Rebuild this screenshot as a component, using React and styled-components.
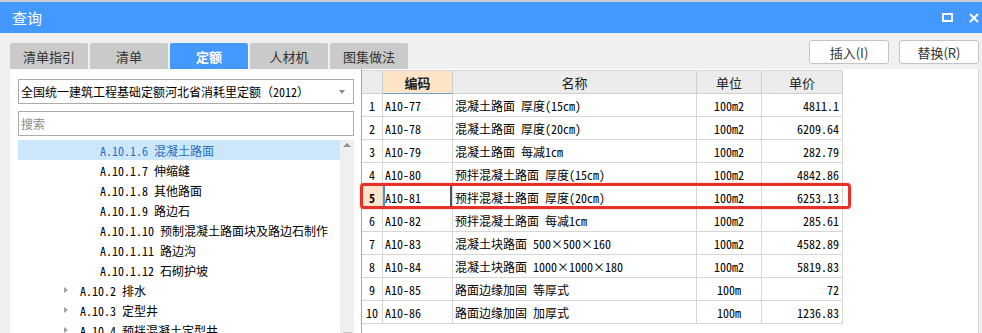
import React from "react";
import styled, { createGlobalStyle } from "styled-components";

const UI = `"Noto Sans CJK SC", "Noto Sans", sans-serif`;
const MONO = `"Noto Sans Mono CJK SC", "Noto Sans CJK SC", monospace`;

const Global = createGlobalStyle`
  html, body { margin: 0; padding: 0; }
  body { background: #f0f0f0; font-family: ${UI}; overflow: hidden; }
  * { box-sizing: border-box; }
`;

const Window = styled.div`
  width: 982px;
  height: 333px;
  display: flex;
  flex-direction: column;
  background: #f0f0f0;
  overflow: hidden;
`;

const TopStrip = styled.div`
  height: 2px;
  background: #c9cdd1;
  flex-shrink: 0;
`;

const TitleBar = styled.div`
  height: 31px;
  flex-shrink: 0;
  background: #4499ff;
  display: flex;
  align-items: center;
  justify-content: space-between;
  padding: 0 3px 0 12px;
`;

const Title = styled.div`
  color: #fff;
  font-family: ${UI};
  font-size: 15px;
  line-height: 20px;
`;

const WinControls = styled.div`
  display: flex;
  align-items: center;
  gap: 16px;
`;

const Body = styled.div`
  flex: 1;
  display: flex;
  flex-direction: column;
  padding: 7px 3px 0 10px;
  min-height: 0;
`;

const Toolbar = styled.div`
  display: flex;
  justify-content: space-between;
  height: 29px;
  flex-shrink: 0;
`;

const Tabs = styled.div`
  display: flex;
  gap: 2px;
  align-self: flex-end;
`;

const Tab = styled.div`
  width: 78px;
  height: 26px;
  border-radius: 2px 2px 0 0;
  background: ${(p) => (p.$active ? "#4499ff" : "#cacaca")};
  color: ${(p) => (p.$active ? "#fff" : "#333")};
  font-weight: ${(p) => (p.$active ? 700 : 400)};
  font-family: ${UI};
  font-size: 13px;
  display: flex;
  align-items: center;
  justify-content: center;
`;

const Buttons = styled.div`
  display: flex;
  gap: 10px;
  align-self: flex-start;
`;

const Button = styled.button`
  width: 80px;
  height: 24px;
  border: 1px solid #c3c3c3;
  border-radius: 3px;
  background: #fff;
  color: #333;
  font-family: ${UI};
  font-size: 13px;
  padding: 0;
  display: flex;
  align-items: center;
  justify-content: center;
`;

const Main = styled.div`
  flex: 1;
  display: flex;
  min-height: 0;
`;

const LeftPanel = styled.div`
  width: 351px;
  flex-shrink: 0;
  background: #fff;
  padding: 10px 7px 0 8px;
  display: flex;
  flex-direction: column;
`;

const Select = styled.div`
  height: 25px;
  border: 1px solid #ababab;
  display: flex;
  align-items: center;
  justify-content: space-between;
  padding: 0 8px 0 2px;
  font-family: ${MONO};
  font-size: 12px;
  color: #000;
`;

const Caret = styled.span`
  width: 0;
  height: 0;
  border-left: 3.5px solid transparent;
  border-right: 3.5px solid transparent;
  border-top: 4px solid #8a8a8a;
`;

const Search = styled.div`
  margin-top: 7px;
  height: 25px;
  border: 1px solid #ababab;
  display: flex;
  align-items: center;
  padding-left: 2px;
  font-family: ${MONO};
  font-size: 12px;
  color: #8a8a8a;
`;

const Tree = styled.div`
  margin-top: 4px;
  flex: 1;
  display: flex;
  min-height: 0;
`;

const TreeList = styled.div`
  flex: 1;
  display: flex;
  flex-direction: column;
`;

const TreeRow = styled.div`
  height: 20px;
  flex-shrink: 0;
  display: flex;
  align-items: center;
  padding-left: ${(p) => (p.$level === 3 ? 82 : 46)}px;
  background: ${(p) => (p.$selected ? "#cce6fa" : "transparent")};
  color: ${(p) => (p.$selected ? "#2a6fc0" : "#000")};
  font-family: ${MONO};
  font-size: 12px;
  white-space: nowrap;
`;

const Expander = styled.span`
  width: 0;
  height: 0;
  border-top: 3.5px solid transparent;
  border-bottom: 3.5px solid transparent;
  border-left: 4px solid #a0a0a0;
  margin-right: 12px;
`;

const ScrollTrack = styled.div`
  width: 14px;
  flex-shrink: 0;
  background: #efefef;
  display: flex;
  flex-direction: column;
  align-items: center;
`;

const UpArrow = styled.span`
  margin-top: 3px;
  width: 0;
  height: 0;
  border-left: 4px solid transparent;
  border-right: 4px solid transparent;
  border-bottom: 4px solid #8f8f8f;
`;

const Thumb = styled.div`
  margin-top: 185px;
  width: 9px;
  height: 30px;
  border-radius: 5px;
  background: #c4c4c4;
`;

const RightPanel = styled.div`
  flex: 1;
  position: relative;
  background: #fff;
  border-left: 1px solid #a9a9a9;
  border-right: 1px solid #d4d4d4;
  padding-top: 1px;
`;

const Grid = styled.div`
  display: grid;
  grid-template-columns: 21px 70px 244px 65px 81px;
  width: 481px;
  border-top: 1px solid #d6d6d6;
`;

const HeadCell = styled.div`
  height: 23px;
  border-right: 1px solid #d0d0d0;
  border-bottom: 1px solid ${(p) => (p.$active ? "#6a9fd8" : "#d0d0d0")};
  background: ${(p) => (p.$active ? "#fde4c6" : "#ececec")};
  color: #222;
  font-family: ${UI};
  font-size: 13px;
  font-weight: ${(p) => (p.$active ? 700 : 400)};
  display: flex;
  align-items: center;
  justify-content: center;
`;

const Cell = styled.div`
  height: 23px;
  border-right: 1px solid #d6d6d6;
  border-bottom: 1px solid #d6d6d6;
  display: flex;
  align-items: center;
  justify-content: ${(p) => p.$align || "flex-start"};
  padding: 0 ${(p) => (p.$align === "flex-end" ? 3 : 2)}px 0 2px;
  font-family: ${MONO};
  font-size: 12px;
  color: #000;
  white-space: nowrap;
  background: ${(p) => (p.$marked ? "#fde4c6" : "#fff")};
  font-weight: ${(p) => (p.$marked ? 700 : 400)};
  box-shadow: ${(p) =>
    p.$current ? "inset 2px 0 0 #4a8fe0, inset -2px 0 0 #555" : "none"};
`;

const Highlight = styled.div`
  position: absolute;
  left: -2px;
  top: 114px;
  width: 491px;
  height: 26px;
  border: 3px solid #e8302b;
  border-radius: 4px;
  box-shadow: 0 0 2px rgba(232, 48, 43, 0.45);
  pointer-events: none;
`;

const treeRows = [
  { level: 3, text: "A.10.1.6 混凝土路面", selected: true },
  { level: 3, text: "A.10.1.7 伸缩缝" },
  { level: 3, text: "A.10.1.8 其他路面" },
  { level: 3, text: "A.10.1.9 路边石" },
  { level: 3, text: "A.10.1.10 预制混凝土路面块及路边石制作" },
  { level: 3, text: "A.10.1.11 路边沟" },
  { level: 3, text: "A.10.1.12 石砌护坡" },
  { level: 2, text: "A.10.2 排水" },
  { level: 2, text: "A.10.3 定型井" },
  { level: 2, text: "A.10.4 预拌混凝土定型井" },
];

const rows = [
  ["A10-77", "混凝土路面 厚度(15cm)", "100m2", "4811.1"],
  ["A10-78", "混凝土路面 厚度(20cm)", "100m2", "6209.64"],
  ["A10-79", "混凝土路面 每减1cm", "100m2", "282.79"],
  ["A10-80", "预拌混凝土路面 厚度(15cm)", "100m2", "4842.86"],
  ["A10-81", "预拌混凝土路面 厚度(20cm)", "100m2", "6253.13"],
  ["A10-82", "预拌混凝土路面 每减1cm", "100m2", "285.61"],
  ["A10-83", "混凝土块路面 500×500×160", "100m2", "4582.89"],
  ["A10-84", "混凝土块路面 1000×1000×180", "100m2", "5819.83"],
  ["A10-85", "路面边缘加固 等厚式", "100m", "72"],
  ["A10-86", "路面边缘加固 加厚式", "100m", "1236.83"],
];

const tabs = ["清单指引", "清单", "定额", "人材机", "图集做法"];

export default function App() {
  return (
    <>
      <Global />
      <Window>
        <TopStrip />
        <TitleBar>
          <Title>查询</Title>
          <WinControls>
            <svg width="11" height="9" viewBox="0 0 11 9">
              <rect x="1" y="1" width="9" height="7" fill="none" stroke="#fff" strokeWidth="2" />
            </svg>
            <svg width="10" height="10" viewBox="0 0 10 10">
              <path d="M1 1 L9 9 M9 1 L1 9" stroke="#fff" strokeWidth="2" />
            </svg>
          </WinControls>
        </TitleBar>
        <Body>
          <Toolbar>
            <Tabs>
              {tabs.map((t) => (
                <Tab key={t} $active={t === "定额"}>
                  {t}
                </Tab>
              ))}
            </Tabs>
            <Buttons>
              <Button>插入(I)</Button>
              <Button>替换(R)</Button>
            </Buttons>
          </Toolbar>
          <Main>
            <LeftPanel>
              <Select>
                <span>全国统一建筑工程基础定额河北省消耗里定额（2012）</span>
                <Caret />
              </Select>
              <Search>搜索</Search>
              <Tree>
                <TreeList>
                  {treeRows.map((r) => (
                    <TreeRow key={r.text} $level={r.level} $selected={r.selected}>
                      {r.level === 2 && <Expander />}
                      {r.text}
                    </TreeRow>
                  ))}
                </TreeList>
                <ScrollTrack>
                  <UpArrow />
                  <Thumb />
                </ScrollTrack>
              </Tree>
            </LeftPanel>
            <RightPanel>
              <Grid>
                <HeadCell />
                <HeadCell $active>编码</HeadCell>
                <HeadCell>名称</HeadCell>
                <HeadCell>单位</HeadCell>
                <HeadCell>单价</HeadCell>
                {rows.map((r, i) => {
                  const cur = i === 4;
                  return (
                    <React.Fragment key={r[0]}>
                      <Cell $align="center" $marked={cur}>
                        {i + 1}
                      </Cell>
                      <Cell $current={cur}>{r[0]}</Cell>
                      <Cell>{r[1]}</Cell>
                      <Cell $align="center">{r[2]}</Cell>
                      <Cell $align="flex-end">{r[3]}</Cell>
                    </React.Fragment>
                  );
                })}
              </Grid>
              <Highlight />
            </RightPanel>
          </Main>
        </Body>
      </Window>
    </>
  );
}
